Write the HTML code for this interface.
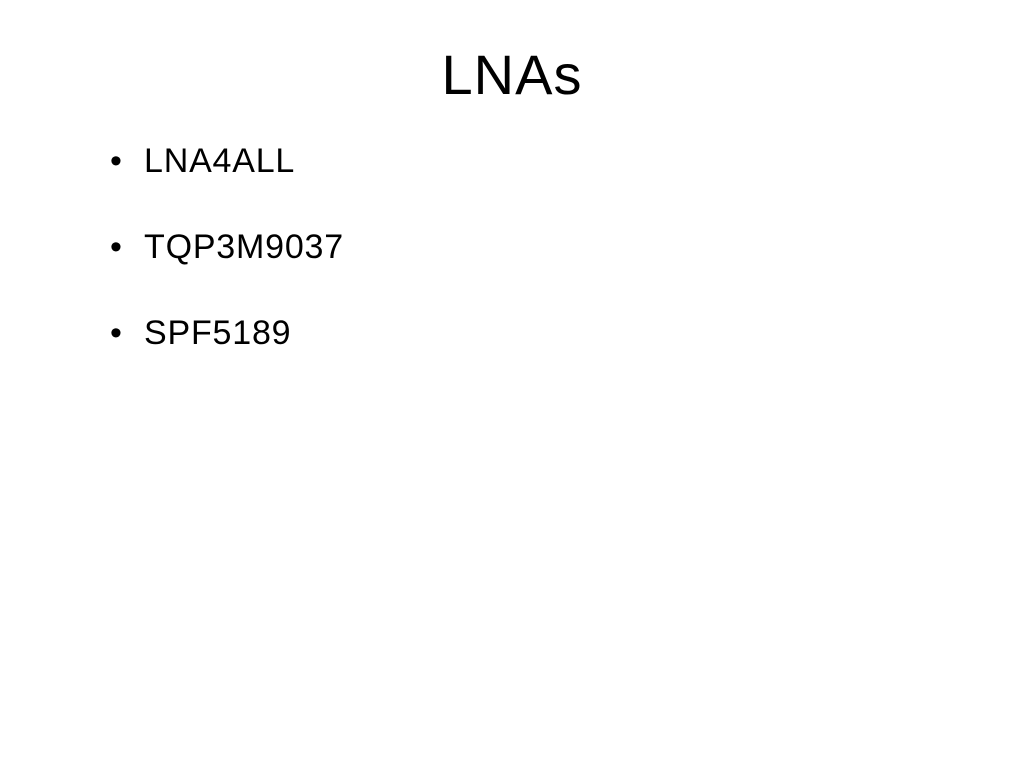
<!DOCTYPE html>
<html><head><style>
html,body{margin:0;padding:0;background:#fff;width:1024px;height:768px;overflow:hidden}
body{font-family:"Liberation Sans",sans-serif;color:#000;position:relative}
.t{position:absolute;top:42px;left:0;width:1024px;text-align:center;font-size:56px;font-weight:300;line-height:66px;letter-spacing:1px}
.b{position:absolute;left:110px;font-size:34px;line-height:40px;letter-spacing:0.8px}
.b span{display:inline-block;width:34px;letter-spacing:0}
</style></head><body>
<div class="t">LNAs</div>
<div class="b" style="top:141px"><span>•</span>LNA4ALL</div>
<div class="b" style="top:227px"><span>•</span>TQP3M9037</div>
<div class="b" style="top:313px"><span>•</span>SPF5189</div>
</body></html>
